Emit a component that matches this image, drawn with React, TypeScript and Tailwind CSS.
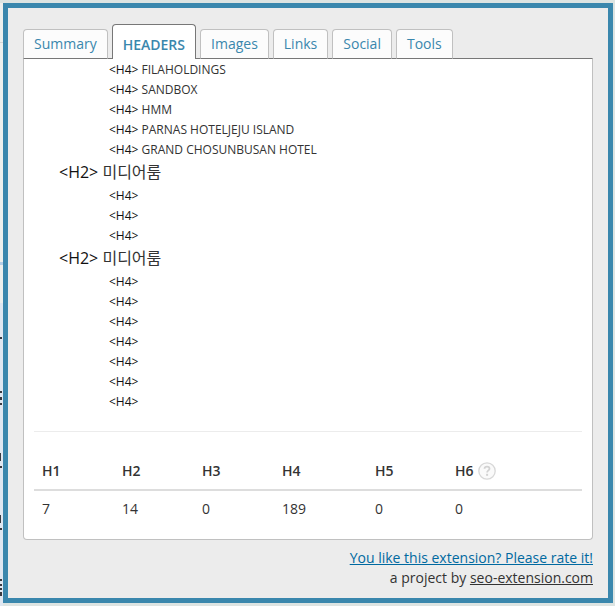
import { useState } from "react";

/* ── data ───────────────────────────────────────────────── */
interface Heading {
  level: 2 | 4;
  text: string;
}

const TABS = ["Summary", "Headers", "Images", "Links", "Social", "Tools"];

const HEADINGS: Heading[] = [
  { level: 4, text: "FILAHOLDINGS" },
  { level: 4, text: "SANDBOX" },
  { level: 4, text: "HMM" },
  { level: 4, text: "PARNAS HOTELJEJU ISLAND" },
  { level: 4, text: "GRAND CHOSUNBUSAN HOTEL" },
  { level: 2, text: "미디어룸" },
  { level: 4, text: "" },
  { level: 4, text: "" },
  { level: 4, text: "" },
  { level: 2, text: "미디어룸" },
  { level: 4, text: "" },
  { level: 4, text: "" },
  { level: 4, text: "" },
  { level: 4, text: "" },
  { level: 4, text: "" },
  { level: 4, text: "" },
  { level: 4, text: "" },
];

const COUNTS = [
  { tag: "H1", count: 7, width: "w-20" },
  { tag: "H2", count: 14, width: "w-20" },
  { tag: "H3", count: 0, width: "w-20" },
  { tag: "H4", count: 189, width: "w-[93px]" },
  { tag: "H5", count: 0, width: "w-20" },
  { tag: "H6", count: 0, width: "" },
];

/* ── round help icon ────────────────────────────────────── */
function HelpIcon() {
  return (
    <svg width="18" height="18" viewBox="0 0 18 18" fill="none">
      <circle cx="9" cy="9" r="8.2" fill="#fafafa" stroke="#d8d8d8" strokeWidth="1.3" />
      <path d="M6.5 6.8 C6.6 5.3 7.6 4.6 9 4.6 C10.5 4.6 11.5 5.4 11.5 6.7 C11.5 8.4 9.1 8.5 9.1 10.6" stroke="#d2d2d2" strokeWidth="1.8" />
      <rect x="8.1" y="11.8" width="2" height="2" fill="#d2d2d2" />
    </svg>
  );
}

/* ── edge of the page behind the popup ──────────────────── */
function PageEdge() {
  return (
    <svg className="absolute left-0 top-0" width="3" height="606" viewBox="0 0 3 606">
      <rect width="3" height="300" y="3" fill="#eef0ee" />
      <rect width="3" height="303" y="303" fill="#dfe7f1" />
      <rect y="42" width="3" height="1" fill="#d5d5d5" />
      <rect y="262" width="3" height="3" fill="#b5cfe8" />
      <g fill="#3a3a40">
        <rect y="337" width="2" height="2" />
        <rect y="391" width="2" height="2" />
        <rect y="397" width="2" height="3" />
        <rect y="403" width="2" height="2" />
        <rect y="453" width="1" height="8" />
        <rect y="466" width="2" height="2" />
        <rect y="515" width="1" height="8" />
        <rect y="528" width="2" height="2" />
        <rect y="579" width="2" height="2" />
        <rect y="584" width="2" height="2" />
        <rect y="588" width="2" height="2" />
        <rect y="592" width="2" height="4" />
      </g>
    </svg>
  );
}

function HeadingRow({ level, text }: Heading) {
  if (level === 2) {
    return (
      <li className="pb-0.5 pl-[25px] text-base leading-6">
        <span className="font-medium text-[#111]">&lt;H2&gt;</span> {text}
      </li>
    );
  }
  return (
    <li className="pl-[75px] text-xs leading-5">
      <span className="font-medium text-[#111]">&lt;H4&gt;</span> {text}
    </li>
  );
}

export default function App() {
  const [active, setActive] = useState("Headers");

  return (
    <div className="relative min-h-screen bg-[#dde4e2] pb-[3px] pl-[3px] pr-0.5 pt-[3px] font-['Open_Sans','Noto_Sans_CJK_KR',sans-serif] text-[#333]">
      <PageEdge />
      <main className="relative border-[5px] border-[#3a87ad] bg-[#ececec] px-[15px] pb-2.5 pt-4">
        {/* tabs */}
        <div role="tablist" className="relative -mb-px flex items-end gap-1">
          {TABS.map((tab) =>
            tab === active ? (
              <button
                key={tab}
                role="tab"
                aria-selected
                className="h-[35px] rounded-t border border-b-0 border-[#777] bg-white px-2.5 pt-1.5 text-sm font-semibold uppercase text-[#3a87ad]"
              >
                {tab}
              </button>
            ) : (
              <button
                key={tab}
                role="tab"
                aria-selected={false}
                onClick={() => setActive(tab)}
                className="h-[30px] rounded-t border border-b-[#777] border-x-[#c0c0c0] border-t-[#c0c0c0] bg-[#fcfcfc] px-2.5 text-sm text-[#3a87ad]"
              >
                {tab}
              </button>
            )
          )}
        </div>

        {/* panel */}
        <section className="rounded-b border border-[#c0c0c0] border-t-[#777] bg-white px-2.5 pb-[13px]">
          <ul className="border-b border-[#ececec] pb-[19px] pt-px">
            {HEADINGS.map((h, i) => (
              <HeadingRow key={i} {...h} />
            ))}
          </ul>

          <table className="mt-5 w-full table-fixed text-left text-sm">
            <thead>
              <tr className="h-[38px] border-b-2 border-[#ddd]">
                {COUNTS.map((c) => (
                  <th key={c.tag} className={`${c.width} px-2 font-semibold`}>
                    {c.tag === "H6" ? (
                      <span className="flex items-center gap-1">
                        {c.tag}
                        <HelpIcon />
                      </span>
                    ) : (
                      c.tag
                    )}
                  </th>
                ))}
              </tr>
            </thead>
            <tbody>
              <tr className="h-9">
                {COUNTS.map((c) => (
                  <td key={c.tag} className="px-2">{c.count}</td>
                ))}
              </tr>
            </tbody>
          </table>
        </section>

        <footer className="pt-2 text-right text-sm leading-5">
          <a href="#rate" className="text-[#0069a0] underline">
            You like this extension? Please rate it!
          </a>
          <p>
            a project by{" "}
            <a href="#project" className="underline">seo-extension.com</a>
          </p>
        </footer>
      </main>
    </div>
  );
}
